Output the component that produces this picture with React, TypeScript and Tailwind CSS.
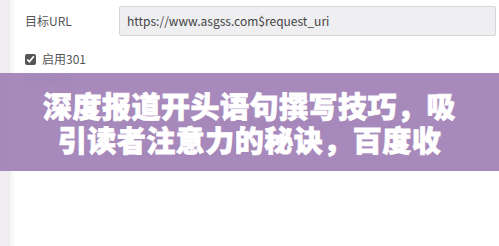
export default function App() {
    return (
        <div className="relative w-[499px] h-[246px] overflow-hidden bg-white" style={{ fontFamily: '"Noto Sans CJK SC", "Noto Sans", sans-serif' }}>
            <div className="flex h-full">
                <div className="w-[10px] bg-[#efedf0]" />
                <div className="w-[6px] bg-gradient-to-r from-[#f6f5f7] to-white" />
                <div className="flex-1 pl-[9px] pr-[3px]">
                    <div className="flex items-center pt-[6px]">
                        <span className="w-[94px] text-[12px] text-[#555]">目标URL</span>
                        <div className="flex-1 h-[30px] flex items-center pl-[7px] bg-[#efeef0] border border-[#d6d5d8] rounded-[2px] text-[12px] text-[#444]">
                            https://www.asgss.com$request_uri
                        </div>
                    </div>
                    <div className="flex items-center gap-[6px] mt-[14px]">
                        <input type="checkbox" defaultChecked className="w-[11px] h-[11px] m-0 accent-[#555]" />
                        <span className="text-[12px] text-[#555]">启用301</span>
                    </div>
                    <div className="mt-[6px] text-[11px] text-[#bbb] leading-[12px]">规则说明</div>
                    <ul className="mt-[26px] text-[13px] text-[#999] space-y-[8px] opacity-60">
                        <li className="flex items-center gap-[40px]"><span className="text-[10px]">•</span>选择重定向的请求类型目标URL或方向一结点中的规范名</li>
                        <li className="flex items-center gap-[40px]"><span className="text-[10px]">•</span>取消访问重定向的请求当前结果</li>
                    </ul>
                </div>
            </div>
            <div className="absolute left-0 right-0 top-[73px] h-[98px] bg-[#a283b7]/95 flex items-center justify-center">
                <p className="text-white font-black text-[29px] leading-[34px] text-center tracking-[0.5px] w-[440px] [-webkit-text-stroke:0.8px_white]">
                    深度报道开头语句撰写技巧，吸引读者注意力的秘诀，百度收
                </p>
            </div>
        </div>
    );
}
